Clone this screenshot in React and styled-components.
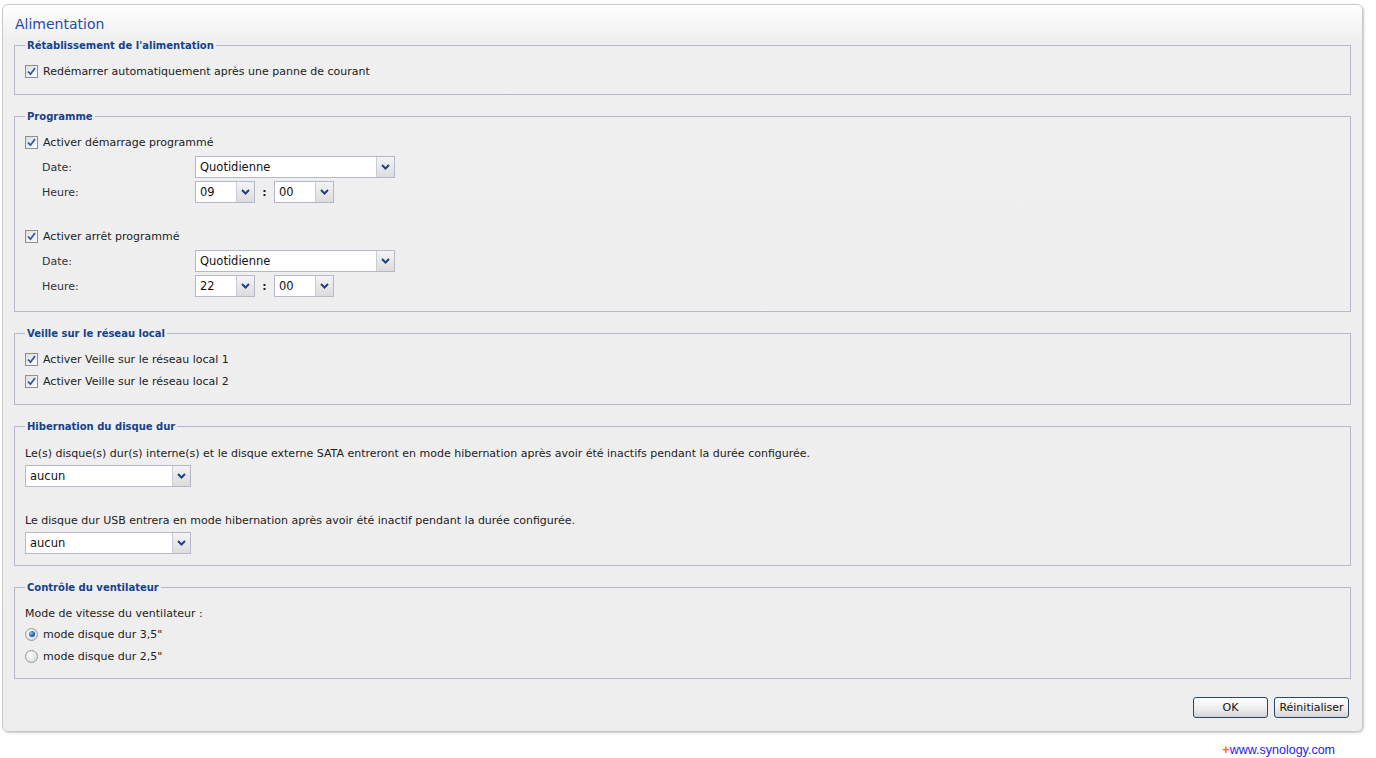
import React from "react";
import styled, { createGlobalStyle } from "styled-components";

const GlobalStyle = createGlobalStyle`
  html, body {
    margin: 0;
    padding: 0;
    background: #ffffff;
  }
  body {
    font-family: "DejaVu Sans", Tahoma, sans-serif;
    font-size: 11px;
    color: #222222;
  }
`;

const Page = styled.div`
  width: 1376px;
  padding: 4px 0 0 2px;
  box-sizing: border-box;
`;

const Panel = styled.div`
  width: 1361px;
  height: 728px;
  box-sizing: border-box;
  border: 1px solid #c9c9c9;
  border-radius: 6px;
  box-shadow: 1px 1px 2px rgba(0, 0, 0, 0.22);
  background: linear-gradient(#ffffff 0px, #efefef 36px, #eeeeee 100%);
  padding: 9px 13px 13px 11px;
  display: flex;
  flex-direction: column;
`;

const Title = styled.h1`
  margin: 0 0 4px 1px;
  font-family: "DejaVu Sans", Tahoma, sans-serif;
  font-weight: normal;
  font-size: 14px;
  line-height: 20px;
  height: 20px;
  color: #2549a9;
`;

const Group = styled.fieldset`
  margin: 0 -2px 14px 0;
  padding: 8px 10px ${(p) => p.$bottom || 12}px 10px;
  border: 1px solid #b5b8c8;
  min-width: 0;
  flex: none;
`;

const Legend = styled.legend`
  padding: 0 2px;
  margin-left: 0;
  height: 14px;
  font-weight: bold;
  font-size: 10px;
  line-height: 15px;
  color: #15428b;
`;

const Row = styled.div`
  display: flex;
  align-items: center;
  height: ${(p) => p.$h || 22}px;
  margin-top: ${(p) => p.$top || 0}px;
`;

const Box = styled.span`
  width: 11px;
  height: 11px;
  border: 1px solid #8e8f8f;
  background: linear-gradient(135deg, #dcdcdc, #ffffff);
  display: inline-flex;
  align-items: center;
  justify-content: center;
  margin-right: 5px;
  flex: none;
`;

const Radio = styled.span`
  width: 11px;
  height: 11px;
  border-radius: 50%;
  border: 1px solid #9a9a9a;
  background: radial-gradient(circle at 40% 35%, #ffffff, #d2d2d2);
  display: inline-flex;
  align-items: center;
  justify-content: center;
  margin-right: 5px;
  flex: none;
  &::after {
    content: "";
    width: 6px;
    height: 6px;
    border-radius: 50%;
    background: ${(p) => (p.$on ? "radial-gradient(circle at 35% 35%, #8ec0f4, #124a96 70%)" : "transparent")};
  }
`;

const FieldLabel = styled.span`
  width: 153px;
  padding-left: 17px;
  color: #333333;
`;

const SelectBox = styled.div`
  width: ${(p) => p.$w}px;
  height: 22px;
  box-sizing: border-box;
  border: 1px solid #b5b8c8;
  background: #ffffff;
  display: flex;
  align-items: stretch;
`;

const SelectText = styled.span`
  flex: 1;
  padding-left: 4px;
  display: flex;
  align-items: center;
  font-size: 11.5px;
  color: #111111;
`;

const Trigger = styled.span`
  width: 17px;
  border-left: 1px solid #c9ccd6;
  background: linear-gradient(#f4f4f4, #dcdcdc);
  display: flex;
  align-items: center;
  justify-content: center;
`;

const Colon = styled.span`
  width: 19px;
  text-align: center;
  font-weight: bold;
`;

const Footer = styled.div`
  margin-top: auto;
  display: flex;
  justify-content: flex-end;
  gap: 6px;
`;

const Button = styled.button`
  width: 75px;
  height: 21px;
  box-sizing: border-box;
  border: 1px solid #2a4767;
  border-radius: 3px;
  background: linear-gradient(#ffffff 0%, #ececec 60%, #d4d4d4 100%);
  font-family: "DejaVu Sans", Tahoma, sans-serif;
  font-size: 11px;
  color: #111111;
  padding: 0;
`;

const Link = styled.div`
  width: 1333px;
  text-align: right;
  margin-top: 10px;
  font-family: "Liberation Sans", Arial, sans-serif;
  font-size: 12.5px;
  line-height: 16px;
  color: #1c1cf0;
`;

const Plus = styled.span`
  color: #ff6a00;
  font-weight: bold;
`;

function Check() {
  return (
    <Box>
      <svg width="9" height="9" viewBox="0 0 9 9">
        <path d="M1 4.5 L3.5 7.2 L8 1" stroke="#3357a8" strokeWidth="1.8" fill="none" />
      </svg>
    </Box>
  );
}

function Chevron() {
  return (
    <svg width="9" height="6" viewBox="0 0 9 6">
      <path d="M1 1 L4.5 4.5 L8 1" stroke="#1f3f86" strokeWidth="2" fill="none" />
    </svg>
  );
}

function Select({ w, value }) {
  return (
    <SelectBox $w={w}>
      <SelectText>{value}</SelectText>
      <Trigger>
        <Chevron />
      </Trigger>
    </SelectBox>
  );
}

function Schedule({ label, hour, top }) {
  return (
    <>
      <Row $top={top}>
        <Check />
        {label}
      </Row>
      <Row $top={3}>
        <FieldLabel>Date:</FieldLabel>
        <Select w={200} value="Quotidienne" />
      </Row>
      <Row $top={3}>
        <FieldLabel>Heure:</FieldLabel>
        <Select w={60} value={hour} />
        <Colon>:</Colon>
        <Select w={60} value="00" />
      </Row>
    </>
  );
}

export default function App() {
  return (
    <Page>
      <GlobalStyle />
      <Panel>
        <Title>Alimentation</Title>

        <Group>
          <Legend>Rétablissement de l'alimentation</Legend>
          <Row>
            <Check />
            Redémarrer automatiquement après une panne de courant
          </Row>
        </Group>

        <Group $bottom={14}>
          <Legend>Programme</Legend>
          <Schedule label="Activer démarrage programmé" hour="09" />
          <Schedule label="Activer arrêt programmé" hour="22" top={22} />
        </Group>

        <Group>
          <Legend>Veille sur le réseau local</Legend>
          <Row>
            <Check />
            Activer Veille sur le réseau local 1
          </Row>
          <Row>
            <Check />
            Activer Veille sur le réseau local 2
          </Row>
        </Group>

        <Group $bottom={11}>
          <Legend>Hibernation du disque dur</Legend>
          <Row $top={1}>
            Le(s) disque(s) dur(s) interne(s) et le disque externe SATA entreront en mode hibernation après avoir été
            inactifs pendant la durée configurée.
          </Row>
          <Row $top={1}>
            <Select w={166} value="aucun" />
          </Row>
          <Row $top={22}>Le disque dur USB entrera en mode hibernation après avoir été inactif pendant la durée configurée.</Row>
          <Row $top={1}>
            <Select w={166} value="aucun" />
          </Row>
        </Group>

        <Group $bottom={11}>
          <Legend>Contrôle du ventilateur</Legend>
          <Row $h={20} $top={1}>Mode de vitesse du ventilateur :</Row>
          <Row>
            <Radio $on />
            mode disque dur 3,5"
          </Row>
          <Row>
            <Radio />
            mode disque dur 2,5"
          </Row>
        </Group>

        <Footer>
          <Button>OK</Button>
          <Button>Réinitialiser</Button>
        </Footer>
      </Panel>
      <Link>
        <Plus>+</Plus>www.synology.com
      </Link>
    </Page>
  );
}
